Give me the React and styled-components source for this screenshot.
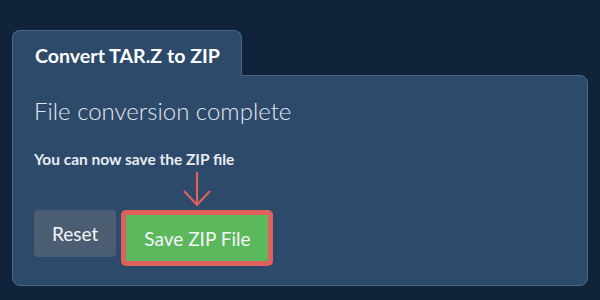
import React from 'react'
import styled, { createGlobalStyle } from 'styled-components'

const Global = createGlobalStyle`
  html, body {
    margin: 0;
    padding: 0;
    background: #11233a;
    font-family: Lato, "Noto Sans", sans-serif;
  }
`

const Page = styled.div`
  width: 600px;
  height: 300px;
  box-sizing: border-box;
  padding: 30px 12px 0 12px;
`

const Tab = styled.div`
  width: 230px;
  height: 46px;
  box-sizing: border-box;
  background: #2d4a6a;
  border: 1px solid #4b6688;
  border-bottom: none;
  border-radius: 8px 8px 0 0;
  position: relative;
  z-index: 1;
  margin-bottom: -1px;
  padding: 15px 0 0 22px;
  color: #ffffff;
  font-weight: 700;
  font-size: 19.6px;
  line-height: 20px;
`

const Panel = styled.div`
  height: 211px;
  box-sizing: border-box;
  background: #2d4a6a;
  border: 1px solid #4b6688;
  border-radius: 0 8px 8px 8px;
  padding: 20px 20px 0 21px;
  display: flex;
  flex-direction: column;
`

const Heading = styled.h2`
  margin: 0;
  font-weight: 300;
  font-size: 24px;
  line-height: 30px;
  color: #e3e8ee;
`

const Note = styled.p`
  margin: 24px 0 0 0;
  font-weight: 700;
  font-size: 15.5px;
  line-height: 18px;
  color: #e8ecf1;
`

const Actions = styled.div`
  display: flex;
  align-items: flex-start;
  gap: 5px;
  margin-top: 42px;
`

const Button = styled.button`
  font-family: inherit;
  font-size: 19px;
  font-weight: 400;
  color: #f4f6f8;
  border: none;
  cursor: pointer;
  box-sizing: border-box;
  padding: 0 18px;
  background: ${p => (p.$primary ? '#5cb85c' : '#4a5d72')};
  height: ${p => (p.$primary ? '56px' : '47px')};
  border-radius: ${p => (p.$primary ? '5px' : '4px')};
  ${p => p.$primary && 'border: 5px solid #df605c;'}
`

const Highlight = styled.div`
  position: relative;
`

const Arrow = styled.svg`
  position: absolute;
  left: 50%;
  top: -40px;
  transform: translateX(-50%);
`

export default function App() {
  return (
    <Page>
      <Global />
      <Tab>Convert TAR.Z to ZIP</Tab>
      <Panel>
        <Heading>File conversion complete</Heading>
        <Note>You can now save the ZIP file</Note>
        <Actions>
          <Button>Reset</Button>
          <Highlight>
            <Arrow width="32" height="38" viewBox="0 0 32 38">
              <path d="M16 2 V35 M3 21 L16 35 L29 21" fill="none" stroke="#df605c" strokeWidth="2.2" />
            </Arrow>
            <Button $primary>Save ZIP File</Button>
          </Highlight>
        </Actions>
      </Panel>
    </Page>
  )
}
